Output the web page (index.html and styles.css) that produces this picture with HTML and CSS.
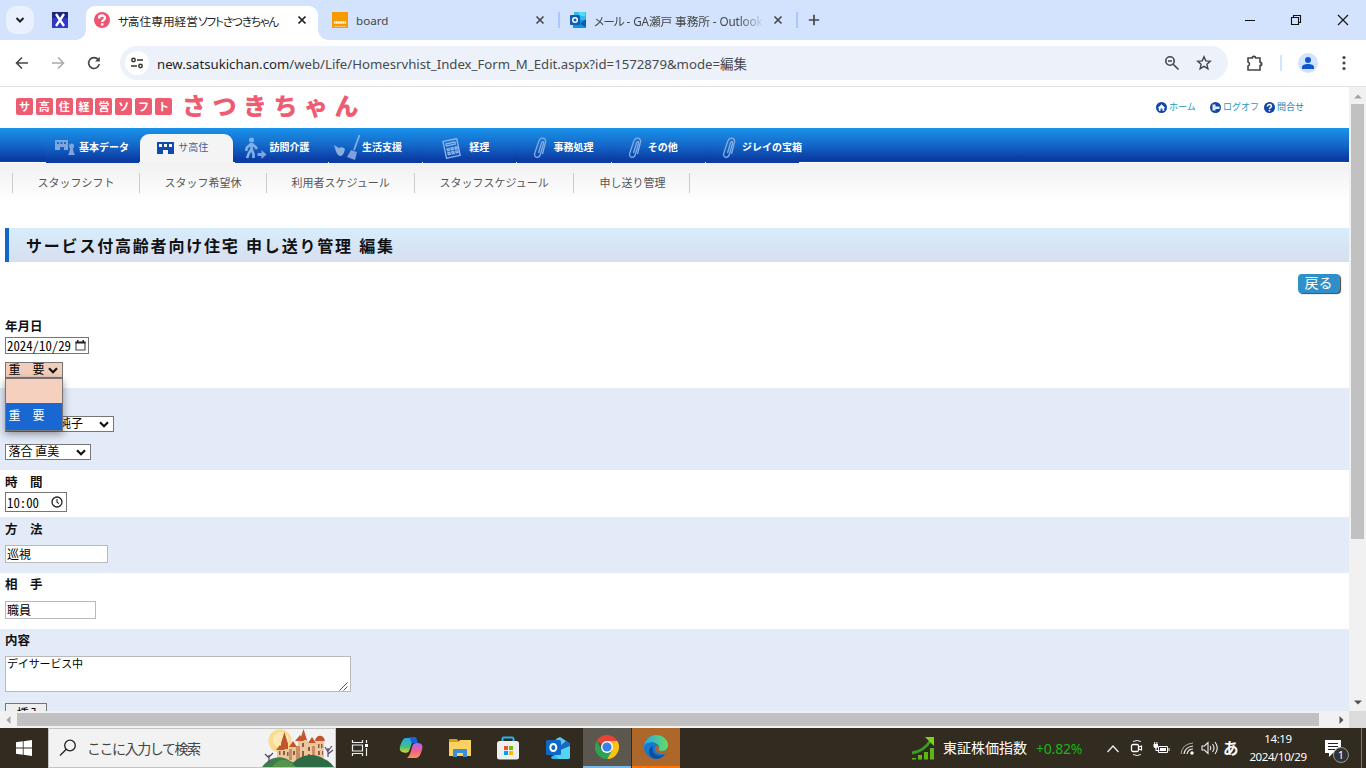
FILE: index.html
```html
<!DOCTYPE html>
<html lang="ja">
<head>
<meta charset="utf-8">
<title>サ高住専用経営ソフトさつきちゃん</title>
<link rel="stylesheet" href="styles.css">
</head>
<body>
<header class="tabstrip">
  <div class="tab-search"><svg width="10" height="8" viewBox="0 0 10 8"><path d="M1.500 2 5 5.500 8.500 2" fill="none" stroke="#1f1f1f" stroke-width="2"/></svg></div>
  <svg class="fav-x" width="16" height="16" viewBox="0 0 16 16"><rect width="16" height="16" fill="#3038c8"/><rect width="16" height="6" fill="#20247c"/><path d="M4 2 12 14M12 2 4 14" stroke="#fff" stroke-width="2.300"/></svg>
  <div class="tab tab-active">
    <svg width="16" height="16" viewBox="0 0 16 16"><circle cx="8" cy="8" r="8" fill="#ee5570"/><path d="M5 6.500C5 2.600 11 2.600 11 6c0 2-2.800 2-2.800 4" fill="none" stroke="#fff" stroke-width="2.300"/><circle cx="8.200" cy="12.400" r="1.300" fill="#fff"/></svg>
    <span class="tab-title t1"><span class="k">サ</span>高住専用経営<span class="k">ソフトさつきちゃん</span></span>
    <svg class="close" width="10" height="10" viewBox="0 0 10 10"><path d="M1.500 1.500l7 7M8.500 1.500l-7 7" stroke="#1f1f1f" stroke-width="1.700"/></svg>
  </div>
  <div class="tab tab-board">
    <svg width="16" height="16" viewBox="0 0 16 16"><rect width="16" height="16" fill="#f59b00"/><path d="M2 10.500h12" stroke="#fff" stroke-width="2.600" stroke-dasharray="1.600 .5"/><path d="M2 14.500h12" stroke="#fbd28a" stroke-width=".7"/></svg>
    <span class="tab-title t2">board</span>
    <svg class="close" width="10" height="10" viewBox="0 0 10 10"><path d="M1.500 1.500l7 7M8.500 1.500l-7 7" stroke="#444746" stroke-width="1.600"/></svg>
  </div>
  <i class="tab-sep"></i>
  <div class="tab tab-mail">
    <svg width="16" height="16" viewBox="0 0 16 16"><rect x="4" width="12" height="9" fill="#35b8f1"/><rect x="9" width="6" height="4" fill="#50d9ff"/><path d="M3 8l13 0v8H3z" fill="#1490df"/><path d="M10 12l6-5v8z" fill="#0a5da8"/><rect y="3" width="10" height="10" rx="1" fill="#0a5fb5"/><circle cx="5" cy="8" r="2.300" fill="none" stroke="#fff" stroke-width="1.500"/></svg>
    <span class="tab-title t3"><span class="k">メール</span> - GA瀬戸 事務所 - Outlook</span>
    <svg class="close" width="10" height="10" viewBox="0 0 10 10"><path d="M1.500 1.500l7 7M8.500 1.500l-7 7" stroke="#444746" stroke-width="1.600"/></svg>
  </div>
  <i class="tab-sep"></i>
  <svg class="newtab" width="12" height="12" viewBox="0 0 12 12"><path d="M6 .8v10.400M.8 6h10.400" stroke="#444746" stroke-width="1.700"/></svg>
  <div class="win-controls">
    <svg width="10" height="12" viewBox="0 0 10 12"><path d="M0 6.500h10" stroke="#111"/></svg>
    <svg width="12" height="12" viewBox="0 0 12 12"><path d="M1.500 3.500h7v7h-7zM3.500 3.500v-2h7v7h-2" fill="none" stroke="#111" stroke-width="1.100"/></svg>
    <svg width="12" height="12" viewBox="0 0 12 12"><path d="M1 1l10 10M11 1 1 11" stroke="#111" stroke-width="1.100"/></svg>
  </div>
</header>

<div class="toolbar">
  <svg class="ti back" width="14" height="14" viewBox="0 0 14 14"><path d="M13 7H2M7 1.500 1.500 7 7 12.500" fill="none" stroke="#444746" stroke-width="1.600"/></svg>
  <svg class="ti fwd" width="14" height="14" viewBox="0 0 14 14"><path d="M1 7h11M7 1.500 12.500 7 7 12.500" fill="none" stroke="#a9abac" stroke-width="1.600"/></svg>
  <svg class="ti reload" width="14" height="14" viewBox="0 0 14 14"><path d="M12.300 8.200A5.400 5.400 0 1 1 11.200 3.600" fill="none" stroke="#444746" stroke-width="1.600"/><path d="M12.800.8V5.500H8z" fill="#444746"/></svg>
  <div class="omnibox">
    <span class="site-info"><svg width="14" height="12" viewBox="0 0 14 12"><g fill="none" stroke="#333" stroke-width="1.500"><circle cx="3.500" cy="3" r="1.700"/><path d="M7 3h6M1 9h6"/><circle cx="10.500" cy="9" r="1.700"/></g></svg></span>
    <span class="url"><b>new.satsukichan.com</b>/web/Life/Homesrvhist_Index_Form_M_Edit.aspx?id=1572879&amp;mode=<span class="url-cjk">編集</span></span>
    <svg class="zoom" width="16" height="16" viewBox="0 0 16 16"><g fill="none" stroke="#444746" stroke-width="1.600"><circle cx="6" cy="6" r="4.200"/><path d="M9.200 9.200 14.500 14.500M4 6h4"/></g></svg>
    <svg class="star" width="16" height="16" viewBox="0 0 16 16"><path d="M8 1.800l1.800 4.100 4.500.4-3.400 3 1 4.400L8 11.400l-3.900 2.300 1-4.400-3.400-3 4.500-.4z" fill="none" stroke="#444746" stroke-width="1.400"/></svg>
  </div>
  <svg class="ext" width="18" height="18" viewBox="0 0 18 18"><path d="M2 4h4.200a1.700 1.700 0 0 1 3.400 0H14v4.200a1.700 1.700 0 0 1 0 3.400V16H2v-4a2.100 2.100 0 0 0 0-4z" fill="none" stroke="#444746" stroke-width="1.600"/><path d="M6.300 3.500a1.600 1.600 0 0 1 3.200 0zM14.500 8.200a1.700 1.700 0 0 1 0 3.400z" fill="#444746"/></svg>
  <i class="tb-sep"></i>
  <span class="avatar"><svg width="12" height="12" viewBox="0 0 12 12"><circle cx="6" cy="3" r="3" fill="#0b57d0"/><path d="M0 12v-2c0-4 12-4 12 0v2z" fill="#0b57d0"/></svg></span>
  <svg class="more" width="4" height="16" viewBox="0 0 4 16"><g fill="#444746"><circle cx="2" cy="2.500" r="1.600"/><circle cx="2" cy="8" r="1.600"/><circle cx="2" cy="13.500" r="1.600"/></g></svg>
</div>

<div class="viewport">
<main class="page">
  <div class="brand">
    <div class="chips"><span>サ</span><span>高</span><span>住</span><span>経</span><span>営</span><span>ソ</span><span>フ</span><span>ト</span></div>
    <div class="brand-name">さつきちゃん</div>
    <div class="user-links">
      <a class="l1"><svg width="11" height="11" viewBox="0 0 11 11"><circle cx="5.500" cy="5.500" r="5.500" fill="#1247a8"/><path d="M1.800 6 5.500 2.200 9.200 6H8.200v2.800H6.400V6.600H4.600v2.200H2.800V6z" fill="#fff"/></svg>ホーム</a>
      <a class="l2"><svg width="11" height="11" viewBox="0 0 11 11"><circle cx="5.500" cy="5.500" r="5.500" fill="#1247a8"/><path d="M2.500 2.500h3v6h-3zM5.500 4.500h4v2.500h-4z" fill="#dfe9f9"/></svg>ログオフ</a>
      <a class="l3"><svg width="11" height="11" viewBox="0 0 11 11"><circle cx="5.500" cy="5.500" r="5.500" fill="#1247a8"/><path d="M3.500 4.500c0-2.800 4-2.600 4-.2 0 1.500-2 1.300-2 2.700" fill="none" stroke="#fff" stroke-width="1.500"/><circle cx="5.500" cy="8.600" r=".9" fill="#fff"/></svg>問合せ</a>
    </div>
  </div>
  <nav class="nav">
    <a class="n1"><svg width="22" height="20" viewBox="0 0 22 20"><path fill="#7fa6dc" fill-rule="evenodd" d="M0 2h13v10H9V9H5v3H0zM2 4v2h2V4zm3.500 0v2h2V4zM9 4v2h2V4z"/><circle cx="16.500" cy="8" r="2.500" fill="#7fa6dc"/><path d="M15 10h3l.5 4 1.500 3h-7l1.500-3z" fill="#7fa6dc"/></svg><span>基本データ</span></a>
    <a class="n2"><svg width="17" height="12" viewBox="0 0 17 12"><path fill="#0f4aae" fill-rule="evenodd" d="M0 0h17v12h-6V8H6v4H0zM2 2v3h3V2zm5 0v3h3V2zm5 0v3h3V2z"/></svg><span>サ高住</span></a>
    <a class="n3"><svg width="22" height="22" viewBox="0 0 22 22"><circle cx="6.500" cy="3" r="2.500" fill="#7fb0e6"/><path d="M6.500 6v7M6 7l-4 3.500L1 14M7 7l3.500 3 1.500 2M6.500 12 4 16l-2 5M6.500 12l2 5v4" fill="none" stroke="#7fb0e6" stroke-width="2.700"/><path d="M12.500 16h4v-3l5 4.500-5 4.500v-3h-4z" fill="#7fa6dc"/></svg><span>訪問介護</span></a>
    <a class="n4"><svg width="26" height="26" viewBox="0 0 26 26"><path d="M25.500 0 20 15" stroke="#7fb0e6" stroke-width="1.800"/><path d="M17 15l6 2-2 8-8-3z" fill="#7fa0dc"/><path d="M0 10l5 3c2-1 4-1 6 1-1 4-2 7-5 7-3-1-4-4-6-11zM9 15l4-2" fill="#8aaee2"/></svg><span>生活支援</span></a>
    <a class="n5"><svg width="19" height="21" viewBox="0 0 19 21"><g transform="rotate(-12 9 10)" fill="none" stroke="#8fb8ea" stroke-width="1.300"><rect x="2.500" y="2" width="14" height="17"/><path d="M5 5h9v2H5zM5 10h2v2H5zM9 10h2v2H9zM13 10h2v2h-2zM5 14h2v2H5zM9 14h2v2H9zM13 14h2v2h-2z"/></g></svg><span>経理</span></a>
    <a class="n6"><svg width="14" height="23" viewBox="0 0 14 23"><path d="M5 16 8 6c.6-2 2.500-1.500 2 .5L7 17c-1 4-6 5-6 0L5 5c2-6 8-4 7 0l-3 12" transform="translate(.5 0)" fill="none" stroke="#82aee5" stroke-width="1.300"/></svg><span>事務処理</span></a>
    <a class="n7"><svg width="14" height="23" viewBox="0 0 14 23"><path d="M5 16 8 6c.6-2 2.500-1.500 2 .5L7 17c-1 4-6 5-6 0L5 5c2-6 8-4 7 0l-3 12" transform="translate(.5 0)" fill="none" stroke="#82aee5" stroke-width="1.300"/></svg><span>その他</span></a>
    <a class="n8"><svg width="14" height="23" viewBox="0 0 14 23"><path d="M5 16 8 6c.6-2 2.500-1.500 2 .5L7 17c-1 4-6 5-6 0L5 5c2-6 8-4 7 0l-3 12" transform="translate(.5 0)" fill="none" stroke="#82aee5" stroke-width="1.300"/></svg><span>ジレイの宝箱</span></a>
  </nav>
  <div class="subnav">
    <a class="s1">スタッフシフト</a><a class="s2">スタッフ希望休</a><a class="s3">利用者スケジュール</a><a class="s4">スタッフスケジュール</a><a class="s5">申し送り管理</a>
  </div>
  <h1 class="title">サービス付高齢者向け住宅 申し送り管理 編集</h1>
  <div class="actions"><button class="back-btn">戻る</button></div>

  <section class="row r-date">
    <label>年月日</label>
    <div class="field f-date"><span class="half">2024/10/29</span><svg width="11" height="11" viewBox="0 0 11 11"><path d="M1 2.500h9v7.500H1z" fill="none" stroke="#444" stroke-width="1.100"/><path d="M.5 1.500h10v2H.5zM2 0h1.500v2H2zM7.500 0H9v2H7.500z" fill="#222"/></svg></div>
    <div class="field sel f-imp"><span>重　要</span><svg width="10" height="7" viewBox="0 0 10 7"><path d="M1 1.300 5 5.200 9 1.300" fill="none" stroke="#111" stroke-width="2.200"/></svg>
      <div class="menu"><div class="opt"></div><div class="opt on">重　要</div></div>
    </div>
  </section>
  <section class="row alt r-staff">
    <div class="field sel f-s1"><span>純子</span><svg width="10" height="7" viewBox="0 0 10 7"><path d="M1 1.300 5 5.200 9 1.300" fill="none" stroke="#111" stroke-width="2.200"/></svg></div>
    <div class="field sel f-s2"><span>落合 直美</span><svg width="10" height="7" viewBox="0 0 10 7"><path d="M1 1.300 5 5.200 9 1.300" fill="none" stroke="#111" stroke-width="2.200"/></svg></div>
  </section>
  <section class="row r-time">
    <label>時　間</label>
    <div class="field f-time"><span class="half">10:00</span><svg width="12" height="12" viewBox="0 0 12 12"><circle cx="6" cy="6" r="5" fill="none" stroke="#222" stroke-width="1.300"/><path d="M6 3v3.300l2 1.300" fill="none" stroke="#222" stroke-width="1.100"/></svg></div>
  </section>
  <section class="row alt r-method">
    <label>方　法</label>
    <div class="field light f-method"><span>巡視</span></div>
  </section>
  <section class="row r-who">
    <label>相　手</label>
    <div class="field light f-who"><span>職員</span></div>
  </section>
  <section class="row alt r-body">
    <label>内容</label>
    <div class="field light f-area"><span>デイサービス中</span><svg width="9" height="9" viewBox="0 0 9 9"><path d="M.5 8.500l8-8M4.500 8.500l4-4" stroke="#555" stroke-width="1"/></svg></div>
    <button class="insert"><span class="up">↑</span>挿入</button>
  </section>
</main>
<aside class="vbar"><svg width="8" height="5" viewBox="0 0 8 5"><path d="M0 4.500 4 .5l4 4z" fill="#a3a3a3"/></svg><div class="vthumb"></div><svg class="down" width="8" height="5" viewBox="0 0 8 5"><path d="M0 .5 4 4.500l4-4z" fill="#505050"/></svg></aside>
</div>
<div class="hbar"><svg width="5" height="8" viewBox="0 0 5 8"><path d="M4.500 0 .5 4l4 4z" fill="#a3a3a3"/></svg><div class="hthumb"></div><svg class="right" width="5" height="8" viewBox="0 0 5 8"><path d="M.5 0l4 4-4 4z" fill="#505050"/></svg><i class="corner"></i></div>

<footer class="taskbar">
  <div class="start"><svg width="16" height="16" viewBox="0 0 16 16"><path d="M0 2.200 6.800 1.300V7.600H0zM7.600 1.200 16 0v7.600H7.600zM0 8.400h6.800v6.300L0 13.800zM7.600 8.400H16V16l-8.400-1.200z" fill="#fff"/></svg></div>
  <div class="search">
    <svg width="18" height="18" viewBox="0 0 18 18"><circle cx="11" cy="6.500" r="5.300" fill="none" stroke="#222" stroke-width="1.300"/><path d="M7.300 10.300 1 16.500" stroke="#222" stroke-width="1.300"/></svg>
    <span class="search-text">ここに入力して検索</span>
    <svg class="castle" width="72" height="38" viewBox="0 0 72 38"><circle cx="18" cy="12" r="11.500" fill="#fbd98d"/><circle cx="19" cy="11" r="8" fill="#fde9b4"/>
      <path d="M15 20h12v-3h9v-6h10v3h8v-2h8v19l-10 4H15z" fill="#edc79c"/><path d="M34 17h4v14h-4zM50 17h3v14h-3zM27 20h3v11h-3z" fill="#c98e66"/>
      <path d="M19 14 22.500 3 26 15zM14 21l4-5 5 5zM38 11 41.500 0 45 11zM46 14l4-6 4 6zM53 12c1-7 9-7 10 0zM27 18l4-6 4 6zM33 12l5-6 4 6zM19 20v-6h7v6z" fill="#c2552b"/>
      <path d="M17 22h1.500v4H17zM21 22h2v4h-2zM25 23h1.500v4H25zM31 22h2v4h-2zM40 14h2v4h-2zM40 22h2v6h-2zM46 18h2v4h-2zM46 25h2v4h-2zM56 15h1.500v4H56zM59 15h1.500v4H59zM56 22h2v4h-2zM60 22h1v4h-1z" fill="#8d5a48"/>
      <path d="M0 38c8-11 20-12 28-6 6 2 8 5 10 6z" fill="#3c7d4b"/><path d="M28 38c8-13 24-15 34-8 6 2 8 6 10 8z" fill="#2e6b45"/><path d="M10 38c6-9 14-9 20-4l4 4z" fill="#56944c"/>
      <path d="M7 34v-8M7 29l-4-4M7 28l4-4M66 28v-9M66 23l-3-5M66 22l4-5M66 25l5-4" fill="none" stroke="#59486c" stroke-width="1.200"/></svg>
  </div>
  <div class="app"><svg width="18" height="18" viewBox="0 0 18 18"><path d="M1.500 1v2.500h10V1M1.500 17v-2.500h10V17M1.500 6h10v6h-10zM15.500 1v3M15.500 9v8" fill="none" stroke="#eee" stroke-width="1.200"/><rect x="14" y="5" width="3" height="3" fill="#fff"/></svg></div>
  <div class="app a2"><svg width="24" height="22" viewBox="0 0 24 22">
    <defs><linearGradient id="c1" x1="0" y1="0" x2="0" y2="1"><stop offset="0" stop-color="#23a8ee"/><stop offset=".6" stop-color="#45c07c"/><stop offset="1" stop-color="#e6d12e"/></linearGradient><linearGradient id="c2" x1="0" y1="0" x2="0" y2="1"><stop offset="0" stop-color="#a36af0"/><stop offset=".5" stop-color="#f0608f"/><stop offset="1" stop-color="#f99455"/></linearGradient></defs>
    <path d="M6 1h10c-3 2-4 9-6 13-1 3-8 2-9-1-1-2 2-11 5-12z" fill="url(#c1)"/><path d="M10 0h6c2 0 2 4 3 6h-6c-2-1-1-5-3-6z" fill="#1762dc"/><path d="M18 6c6 0 6 3 5 7-2 6-3 8-7 8H8c3-2 4-7 5-11 1-3 2-4 5-4z" fill="url(#c2)"/></svg></div>
  <div class="app a3"><svg width="22" height="18" viewBox="0 0 22 18"><path d="M0 0h8l2 3H0z" fill="#e29c08"/><path d="M0 3h9l2-2h11v16H0z" fill="#fbd160"/><path d="M4 18v-7q0-1 1-1h12q1 0 1 1v7h-4v-4H8v4z" fill="#3c8fd2"/></svg></div>
  <div class="app a4"><svg width="24" height="24" viewBox="0 0 24 24"><path d="M6.500 6V2.500Q6.500 1.500 8 1.500h8q1.500 0 1.500 1V6" fill="none" stroke="#2bb3ed" stroke-width="2"/><rect x="1" y="5" width="22" height="18.500" rx="2.500" fill="#eee"/><path d="M8 10h4v4H8z" fill="#f14f21"/><path d="M13 10h4v4h-4z" fill="#7eb900"/><path d="M8 15h4v4H8z" fill="#00a3ee"/><path d="M13 15h4v4h-4z" fill="#feb800"/></svg></div>
  <div class="app a4"><svg width="24" height="24" viewBox="0 0 24 24"><path d="M5 6 14 1l10 6v4L14 18 5 12z" fill="#1969bd"/><path d="M10 3l4-2 6 4-6 5z" fill="#5ec5ef"/><path d="M5 21c0 1 1 2 2 2h15c1 0 2-1 2-2V10z" fill="#38b9ed"/><path d="M24 10v11c0 1-1 2-2 2h-9l-6-6z" fill="#54d4f5"/><rect y="4" width="15" height="15" rx="1.500" fill="#0e68c8"/><ellipse cx="7.300" cy="11.500" rx="3" ry="3.500" fill="none" stroke="#fff" stroke-width="2"/></svg></div>
  <div class="app chrome"><svg width="24" height="24" viewBox="0 0 24 24"><path d="M12 12 1.600 6A12 12 0 0 1 22.400 6z" fill="#ea4335"/><path d="M12 12V6h10.400A12 12 0 0 1 12 24l5.200-9z" fill="#fbc116"/><path d="M12 12l5.200 3L12 24A12 12 0 0 1 1.600 6l5.200 9z" fill="#2fa24f"/><circle cx="12" cy="12" r="6" fill="#fff"/><circle cx="12" cy="12" r="4.600" fill="#3b7ded"/></svg></div>
  <div class="app edge"><svg width="24" height="24" viewBox="0 0 24 24"><defs><linearGradient id="e1"><stop offset="0" stop-color="#28a7e5"/><stop offset="1" stop-color="#65dd62"/></linearGradient></defs><circle cx="12" cy="12" r="12" fill="#1579cf"/><path d="M0 11C1 4 6 0 12 0c7 0 12 5 12 10 0 4-3 6-6 6-4 0-4-1-3-3 1-5-10-9-15-2z" fill="url(#e1)"/><path d="M9 11c-2 7 4 12 12 8-3 4-8 6-12 4-6-3-5-10 0-12z" fill="#0c4f9e"/><path d="M15 13c-1 2-1 3 3 3 3 0 5-1 6-3v4c-1 2-3 3-6 2-5 0-9-4-6-8 1-1 3 0 3 2z" fill="#ad6728"/></svg></div>
  <div class="stock"><svg width="24" height="24" viewBox="0 0 24 24"><path d="M1 22h4v1.500H1zM7 19h4v4.500H7zM13 16h4v7.500h-4zM19 12h4v11.500h-4z" fill="#5cb615"/><path d="M1 17c8-1 14-5 19-13" fill="none" stroke="#389c28" stroke-width="2.800"/><path d="M14 1h9v9z" fill="#7bd318"/></svg><span class="stock-name">東証株価指数</span><span class="stock-val">+0.82%</span></div>
  <div class="tray">
    <svg class="y1" width="14" height="9" viewBox="0 0 14 9"><path d="M1.500 8 7 2l5.500 6" fill="none" stroke="#eee" stroke-width="1.300"/></svg>
    <svg class="y2" width="14" height="18" viewBox="0 0 14 18"><path d="M3 2.500q4-2 8 0M3 15.500q4 2 8 0" fill="none" stroke="#eee"/><rect x="1.500" y="5.500" width="7" height="7" rx="1.500" fill="none" stroke="#fff" stroke-width="1.300"/><path d="M8.500 8l3-1v4l-3-1" fill="none" stroke="#fff" stroke-width="1.200"/></svg>
    <svg class="y3" width="17" height="13" viewBox="0 0 17 13"><path d="M5.500 4.500h9v6h-9zM16 6v3" fill="none" stroke="#fff"/><path d="M7 6h6v3H7zM.5 2h4.500v3L3.500 6.500V8h3v1H2.500V6.500L.5 5zM1.200 0h1v2.500h-1zM3.400 0h1v2.500h-1z" fill="#fff"/></svg>
    <svg class="y4" width="14" height="14" viewBox="0 0 14 14"><g fill="none"><path d="M1 13Q2 3 13 2" stroke="#aaa"/><path d="M4 13Q5 6 13 5M7 13q1-5 6-5" stroke="#eee" stroke-width="1.200"/></g><circle cx="12" cy="12" r="1.700" fill="#fff"/></svg>
    <svg class="y5" width="17" height="14" viewBox="0 0 17 14"><path d="M1 5h2.500L7 1.500v11L3.500 9H1zM9 5q1.500 2 0 4M11.500 3q3 4 0 8M14 1q4.500 6 0 12" fill="none" stroke="#eee" stroke-width="1.100"/></svg>
    <span class="ime">あ</span>
  </div>
  <div class="clock"><span>14:19</span><span>2024/10/29</span></div>
  <div class="notify"><svg width="17" height="17" viewBox="0 0 17 17"><path d="M0 0h16v13h-8l-4 4v-4H0z" fill="#fff"/><path d="M3 3.500h10M3 6.500h10M3 9.500h7" stroke="#222"/></svg><span class="badge">1</span></div>
  <i class="peek"></i>
</footer>
</body>
</html>
```
FILE: styles.css
```css
* { box-sizing: border-box; }
body { margin: 0; width: 1366px; height: 768px; overflow: hidden; display: flex; flex-direction: column; font-family: "Noto Sans CJK JP", sans-serif; color: #111; background: #fff; white-space: nowrap; }
svg { display: block; flex: none; }
button { font: inherit; margin: 0; }

/* browser tabs */
.tabstrip { height: 40px; flex: none; display: flex; align-items: center; background: #d3e3fd; padding-left: 6px; }
.tab-search { width: 28px; height: 28px; border-radius: 10px; background: #eaf1fe; display: flex; align-items: center; justify-content: center; }
.fav-x { margin: 0 18px; }
.tab { display: flex; align-items: center; font: 12px "Noto Sans", "Noto Sans CJK JP", sans-serif; color: #444746; }
.tab-title { overflow: hidden; margin-left: 8px; }
.k { font-feature-settings: "palt"; letter-spacing: -1px; }
.tab-active { width: 232px; height: 34px; margin-top: 6px; padding: 0 0 6px 8px; background: #fff; border-radius: 9px 9px 0 0; color: #1f1f1f; position: relative; }
.tab-active::before, .tab-active::after { content: ""; position: absolute; bottom: 0; width: 10px; height: 10px; }
.tab-active::before { left: -10px; background: radial-gradient(circle at 0 0, #d3e3fd 9.500px, #fff 10px); }
.tab-active::after { right: -10px; background: radial-gradient(circle at 100% 0, #d3e3fd 9.500px, #fff 10px); }
.t1 { width: 164px; font-size: 11.700px; }
.tab-active .close { margin-left: 15px; }
.t1 .k { letter-spacing: -1.200px; }
.tab-board { width: 228px; padding-left: 14px; }
.t2 { width: 168px; font-size: 11.600px; }
.tab-board .close { margin-left: 11px; }
.tab-mail { width: 224px; padding-left: 10px; }
.tab-mail .close { margin-left: 10px; }
.t3 { width: 169px; font-size: 11.700px; letter-spacing: -.1px; -webkit-mask-image: linear-gradient(90deg, #000 145px, transparent 170px); mask-image: linear-gradient(90deg, #000 145px, transparent 170px); }
.tab-sep { width: 2px; height: 16px; background: #a8c7fa; margin-left: 12px; }
.tab-sep + .newtab { margin-left: 10px; }
.win-controls { margin-left: auto; display: flex; align-items: center; gap: 35px; padding-right: 17px; }

/* toolbar */
.toolbar { height: 47px; flex: none; display: flex; align-items: center; border-bottom: 1px solid #dfe1e5; padding-left: 15px; background: #fff; }
.fwd { margin-left: 22px; }
.reload { margin-left: 22px; }
.omnibox { width: 1108px; height: 34px; margin-left: 19px; border-radius: 17px; background: #edf1fa; display: flex; align-items: center; padding-left: 5px; }
.site-info { width: 24px; height: 24px; border-radius: 50%; background: #fff; display: flex; align-items: center; justify-content: center; }
.url { width: 1007px; margin-left: 8px; padding-bottom: 1px; font: 13.200px "Noto Sans", "Noto Sans CJK JP", sans-serif; color: #474a4d; }
.url b { font-weight: 400; color: #1f1f1f; }
.url-cjk { font-size: 13.500px; }
.star { margin-left: 16px; }
.ext { margin-left: 18px; }
.tb-sep { width: 2px; height: 16px; background: #d3e3fd; margin-left: 16px; }
.avatar { width: 20px; height: 20px; border-radius: 50%; background: #d3e3fd; display: flex; align-items: center; justify-content: center; margin-left: 16px; }
.more { margin-left: 24px; }

/* page */
.viewport { height: 624px; flex: none; display: flex; overflow: hidden; }
.page { width: 1349px; overflow: hidden; }
.brand { height: 41px; display: flex; align-items: flex-start; padding-left: 16px; }
.chips { display: flex; gap: 2.850px; margin-top: 11px; width: 166px; }
.chips span { width: 17px; height: 17px; border-radius: 2px; background: #ee5c72; color: #fff; font-size: 11px; font-weight: 700; line-height: 16px; text-align: center; }
.brand-name { width: 240px; font-size: 24px; font-weight: 900; line-height: 36px; letter-spacing: 6.500px; color: #ee5c72; }
.user-links { margin-left: auto; display: flex; align-items: center; margin-top: 13px; font-size: 9px; line-height: 14px; color: #2497c4; width: 193px; }
.user-links a { display: flex; align-items: center; gap: 2px; }
.user-links a svg { margin-top: 1px; }
.l1 { width: 54px; }
.l2 { width: 54px; }
.l3 { color: #1b7fb4; }

.nav { height: 35px; display: flex; padding-left: 46px; background: linear-gradient(#1a93ea, #1467c8 50%, #0b3da5 90%) 0 0 / 100% 34px no-repeat; }
.nav a { width: 94.300px; height: 35px; display: flex; align-items: center; color: #fff; font-size: 10px; font-weight: 700; padding-top: 4px; background: linear-gradient(#1a93ea, #1467c8 50%, #0b3da5 90%); border-right: 1px solid transparent; background-clip: padding-box; }
.nav a svg { margin-top: 1px; }
.nav a span { padding-bottom: 2px; }
.n1 { padding-left: 9px; }
.n1 span { margin-left: 2px; }
.nav .n2 { width: 93px; margin: 6px 1.300px 0 0; height: 29px; padding: 0 0 2px 17px; background: #f4f4f4; border-radius: 9px 9px 0 0; color: #3d6099; font-weight: 400; }
.n2 span { margin-left: 4px; }
.n3 { padding-left: 10px; }
.n3 span { margin-left: 3px; }
.n4 { padding-left: 5px; }
.n4 span { margin-left: 2px; }
.n5 { padding-left: 19px; }
.n5 span { margin-left: 8px; }
.n6 { padding-left: 16px; }
.n6 span { margin-left: 6px; }
.n7 { padding-left: 16px; }
.n7 span { margin-left: 6px; }
.n8 { padding-left: 16px; }
.n8 span { margin-left: 6px; }

.subnav { height: 38px; padding: 10px 0 0 12px; display: flex; background: linear-gradient(#f1f1f1, #fff); font-size: 11px; line-height: 18px; color: #555; }
.subnav a { height: 20px; border-left: 1px solid #ccc; padding-left: 24.500px; }
.s1, .s2 { width: 127px; }
.s3 { width: 148px; }
.s4 { width: 159px; }
.subnav .s5 { width: 117px; padding-left: 25.500px; border-right: 1px solid #ccc; }

.title { margin: 27px 0 0 5px; height: 34px; border-left: 4px solid #1168c8; padding-left: 17px; background: linear-gradient(#d8edfb, #d7def0); font-size: 16px; font-weight: 700; line-height: 34px; letter-spacing: 1.800px; word-spacing: 1px; }
.actions { height: 55px; padding: 12px 9px 0 0; display: flex; justify-content: flex-end; align-items: flex-start; }
.back-btn { width: 42px; height: 19px; padding: 0 1px 2px 0; border: 0; border-radius: 4px; background: #2f90c9; color: #fff; font-size: 14px; line-height: 17px; box-shadow: 1px 1px 1px #444; }

/* form */
.row { padding-left: 5px; }
.alt { background: #e3eaf8; }
.row label { display: block; height: 19px; font-size: 12.500px; font-weight: 700; line-height: 17px; }
.field { border: 1px solid #767676; background: #fff; font-size: 12px; display: flex; align-items: center; position: relative; color: #000; }
.light { border-color: #b9b9b9; padding-left: 1px; }
.light span { padding-bottom: 2px; }
.half { font-feature-settings: "hwid"; font-size: 12.800px; }
.r-date { height: 71px; }
.f-date { width: 84px; height: 17px; margin-top: 1px; padding-left: 1px; }
.f-date .half { width: 68px; }
.sel { padding-left: 2.500px; line-height: 14px; }
.sel span { padding-bottom: 2px; }
.sel svg { margin-left: auto; margin-right: 4px; }
.f-imp { width: 58px; height: 16px; margin-top: 8px; background: #f2cdbb; z-index: 2; }
.menu { position: absolute; left: -1px; top: 15px; width: 58px; height: 53px; border: 1px solid #767676; background: #f5d0bf; box-shadow: 0 3px 8px rgba(0,0,0,.4); }
.opt { height: 24px; }
.opt.on { height: 27px; background: #1967d2; color: #fff; line-height: 24px; padding-left: 2.500px; }
.r-staff { height: 82px; padding-top: 28px; }
.f-s1 { width: 109px; height: 16px; padding-left: 53px; }
.f-s2 { width: 86px; height: 16px; margin-top: 12px; }
.r-time { height: 47px; padding-top: 3px; }
.f-time { width: 62px; height: 20px; padding-left: 1px; }
.f-time .half { width: 42px; margin-right: 2px; }
.r-method { height: 56px; padding-top: 3px; }
.f-method { width: 103px; height: 18px; margin-top: 6px; }
.r-who { height: 56px; padding-top: 2px; }
.f-who { width: 91px; height: 18px; margin-top: 7px; }
.r-body { height: 90px; padding-top: 2px; }
.f-area { width: 346px; height: 36px; margin-top: 6px; font-size: 11px; line-height: 12px; letter-spacing: -.15px; align-items: flex-start; }
.f-area svg { margin: 25px 2px 0 auto; }
.insert { display: block; width: 42px; height: 20px; margin-top: 11px; padding: 0; border: 1px solid #767676; border-radius: 0; background: #efefef; font-size: 12px; line-height: 18px; }
.up { font-family: "Liberation Sans", sans-serif; font-size: 11px; }

/* scrollbars */
.vbar { width: 17px; background: #f1f1f1; display: flex; flex-direction: column; align-items: center; padding: 7px 0 6px; }
.vthumb { width: 13px; height: 435px; margin-top: 5px; background: #c1c1c1; }
.down { margin-top: auto; }
.hbar { height: 17px; flex: none; display: flex; align-items: center; background: #f1f1f1; padding-left: 6px; }
.hthumb { width: 1302px; height: 13px; margin-left: 6px; background: #c1c1c1; }
.right { margin-left: 20px; }
.corner { margin-left: auto; width: 17px; height: 17px; background: #dcdcdc; }

/* taskbar */
.taskbar { height: 40px; flex: none; display: flex; align-items: center; background: #312b20; color: #fff; }
.start { width: 48px; display: flex; justify-content: center; }
.search { width: 288px; height: 40px; background: #f2f2f2; border: 1px solid #c4c4c4; display: flex; align-items: center; padding-left: 10px; color: #444; }
.search-text { font-size: 14px; margin-left: 10px; padding-bottom: 1px; width: 175px; letter-spacing: -1.450px; }
.app { width: 48px; height: 40px; display: flex; align-items: center; justify-content: center; }
.a2 { width: 53px; }
.a3 { width: 46px; }
.a4 { width: 50px; }
.chrome { background: #5b574e; border-bottom: 2px solid #76b9ed; }
.edge { margin-left: 1px; background: #ad6728; border-bottom: 2px solid #ff7300; }
.stock { margin-left: 231px; width: 195px; display: flex; align-items: center; }
.stock-name { font-size: 14px; margin-left: 8px; padding-bottom: 2px; width: 93px; }
.stock-val { font: 14px "Noto Sans", sans-serif; color: #18b418; letter-spacing: -.2px; }
.tray { width: 136px; display: flex; align-items: center; }
.y2 { margin-left: 10px; }
.y3 { margin-left: 9px; }
.y4 { margin-left: 10px; }
.y5 { margin-left: 7px; }
.ime { margin-left: 5px; padding-bottom: 2px; font-size: 15.500px; font-weight: 700; }
.clock { width: 76px; padding-right: 4px; display: flex; flex-direction: column; align-items: center; gap: 1px; padding-bottom: 1px; font: 11.500px/17px "Noto Sans", sans-serif; letter-spacing: -.4px; }
.notify { margin-left: 7px; width: 36px; position: relative; }
.badge { position: absolute; left: 8px; top: 7px; width: 16px; height: 16px; border: 1px solid #9a9a9a; border-radius: 50%; background: #333; font: 11px/14px "Noto Sans", sans-serif; text-align: center; }
.peek { width: 1px; height: 40px; background: #777; }
```
